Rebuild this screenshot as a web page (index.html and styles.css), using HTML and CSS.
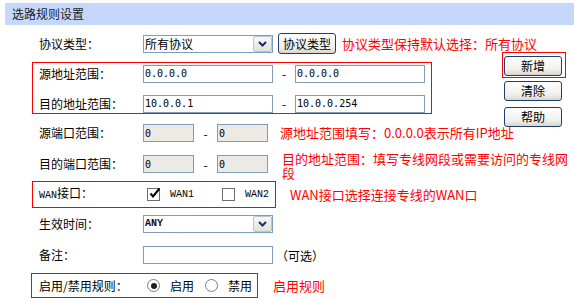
FILE: index.html
```html
<!DOCTYPE html>
<html lang="zh-CN">
<head>
    <meta charset="UTF-8">
    <meta name="viewport" content="width=device-width, initial-scale=1.0">
    <title>选路规则设置</title>
    <link rel="stylesheet" href="styles.css">
</head>
<body>
    <div class="title">选路规则设置</div>

    <div class="form">
        <div class="row row-proto">
            <span class="label">协议类型：</span>
            <div class="select">
                <span class="select-text">所有协议</span>
                <span class="select-arrow">
                    <svg width="9" height="6" viewBox="0 0 9 6"><path d="M1 1 L4.5 4.5 L8 1" fill="none" stroke="#1f2b5c" stroke-width="2"/></svg>
                </span>
            </div>
            <button class="btn btn-inline">协议类型</button>
            <span class="note">协议类型保持默认选择：所有协议</span>
        </div>

        <div class="mark range-box">
            <div class="range-row">
                <span class="label">源地址范围：</span>
                <input class="field ip" type="text" value="0.0.0.0">
                <span class="dash">-</span>
                <input class="field ip" type="text" value="0.0.0.0">
            </div>
            <div class="range-row">
                <span class="label">目的地址范围：</span>
                <input class="field ip" type="text" value="10.0.0.1">
                <span class="dash">-</span>
                <input class="field ip" type="text" value="10.0.0.254">
            </div>
        </div>

        <div class="side">
            <div class="mark add-box"><button class="btn">新增</button></div>
            <button class="btn btn-clear">清除</button>
            <button class="btn btn-help">帮助</button>
        </div>

        <div class="row port-first">
            <span class="label">源端口范围：</span>
            <input class="field port" type="text" value="0" disabled>
            <span class="dash dash-port">-</span>
            <input class="field port" type="text" value="0" disabled>
            <span class="note note-src">源地址范围填写：0.0.0.0表示所有IP地址</span>
        </div>

        <div class="row port-second">
            <span class="label">目的端口范围：</span>
            <input class="field port" type="text" value="0" disabled>
            <span class="dash dash-port">-</span>
            <input class="field port" type="text" value="0" disabled>
            <span class="note note-dst">目的地址范围：填写专线网段或需要访问的专线网段</span>
        </div>

        <div class="row row-wan">
            <div class="mark wan-box">
                <span class="label"><span class="mono">WAN</span>接口：</span>
                <span class="check checked">
                    <svg width="13" height="13" viewBox="0 0 13 13"><path d="M2.5 6.5 L5 9.5 L11.5 1.5" fill="none" stroke="#000" stroke-width="2"/></svg>
                </span>
                <span class="opt mono">WAN1</span>
                <span class="check check-second"></span>
                <span class="opt mono">WAN2</span>
            </div>
            <span class="note note-wan">WAN接口选择连接专线的WAN口</span>
        </div>

        <div class="row row-time">
            <span class="label">生效时间：</span>
            <div class="select">
                <span class="select-text mono any">ANY</span>
                <span class="select-arrow">
                    <svg width="9" height="6" viewBox="0 0 9 6"><path d="M1 1 L4.5 4.5 L8 1" fill="none" stroke="#1f2b5c" stroke-width="2"/></svg>
                </span>
            </div>
        </div>

        <div class="row row-memo">
            <span class="label">备注：</span>
            <input class="field" type="text" value="">
            <span class="optional">（可选）</span>
        </div>

        <div class="row row-enable">
            <div class="mark enable-box">
                <span class="label">启用/禁用规则：</span>
                <span class="radio checked"></span>
                <span class="opt">启用</span>
                <span class="radio radio-second"></span>
                <span class="opt">禁用</span>
            </div>
            <span class="note note-enable">启用规则</span>
        </div>
    </div>
</body>
</html>
```

FILE: styles.css
```css
body {
    margin: 0;
    padding-top: 3px;
    background: #fff;
    color: #000;
    font-family: "Noto Sans CJK SC", sans-serif;
    font-size: 12px;
}

.title {
    margin-left: 5px;
    height: 22px;
    line-height: 22px;
    padding-left: 7px;
    background: #c5d8fb;
    color: #1c1c1c;
    font-size: 12px;
}

.form {
    display: grid;
    grid-template-columns: minmax(0, 1fr) 72px;
}

.row {
    grid-column: 1 / -1;
    display: flex;
    align-items: center;
    height: 30px;
    padding-left: 39px;
    min-width: 0;
}

.label {
    width: 104px;
    flex-shrink: 0;
    line-height: 14px;
    white-space: nowrap;
}

.mono {
    font-family: "Liberation Mono", monospace;
    font-size: 10px;
}

.note {
    color: #ff0000;
    font-size: 13px;
    line-height: 14px;
    white-space: nowrap;
}

/* red marks around groups */
.mark {
    border: 1px solid #ff0000;
    box-sizing: border-box;
}

.row-proto {
    height: 37px;
}

.row-proto .note {
    margin-left: 6px;
}

/* select look-alike */
.select {
    display: flex;
    align-items: center;
    width: 130px;
    height: 18px;
    flex-shrink: 0;
    box-sizing: border-box;
    border: 1px solid #7f9db9;
    background: #fff;
}

.select-text {
    flex: 1;
    padding-left: 1px;
    line-height: 14px;
}

.select-text.any {
    font-weight: bold;
    color: #0a0a30;
}

.select-arrow {
    width: 19px;
    height: 16px;
    box-sizing: border-box;
    display: flex;
    align-items: center;
    justify-content: center;
    border: 1px solid #b9c3d3;
    border-radius: 2px;
    background: linear-gradient(#f8f8f6, #e2e2dc);
}

.btn {
    width: 58px;
    height: 20px;
    flex-shrink: 0;
    padding: 0;
    border: 1px solid #1c3f6e;
    border-radius: 3px;
    background: linear-gradient(#ffffff, #f0f0ec 70%, #d9d5cc);
    font-family: "Noto Sans CJK SC", sans-serif;
    font-size: 12px;
    line-height: 16px;
    color: #000;
}

.btn-inline {
    height: 21px;
    margin-left: 5px;
}

.field {
    width: 130px;
    height: 18px;
    flex-shrink: 0;
    box-sizing: border-box;
    margin: 0;
    padding: 0 1px;
    border: 1px solid #7f9db9;
    background: #fff;
    font-family: "DejaVu Sans Mono", monospace;
    font-size: 10px;
    color: #000;
    outline: none;
}

.field.port {
    width: 51px;
    background: #ebeae4;
}

.field:disabled {
    color: #000;
    -webkit-text-fill-color: #000;
}

.dash {
    width: 22px;
    text-align: center;
    flex-shrink: 0;
}

.dash-port {
    width: 23px;
}

/* source / destination address box */
.range-box {
    grid-column: 1;
    margin-left: 32px;
    width: 400px;
    height: 52px;
    padding: 1px 0 0 6px;
}

.range-row {
    display: flex;
    align-items: center;
    height: 19px;
}

.range-row + .range-row {
    margin-top: 11px;
}

/* right hand buttons */
.side {
    grid-column: 2;
    grid-row: 2 / span 2;
    margin-top: -10px;
    align-self: start;
    display: flex;
    flex-direction: column;
    align-items: flex-start;
}

.add-box {
    padding: 3px 3px 1px 1px;
}

.btn-clear {
    margin: 3px 0 0 2px;
}

.btn-help {
    margin: 6px 0 0 2px;
}

.port-first {
    grid-column: 1;
    margin-top: 4px;
}

.port-second {
    margin-top: 1px;
}

.note-src {
    margin-left: 12px;
}

.note-dst {
    flex: 1;
    min-width: 0;
    margin-left: 14px;
    margin-top: 4px;
    white-space: normal;
}

/* WAN row */
.row-wan {
    height: 27px;
    margin-top: 2px;
    padding-left: 32px;
}

.wan-box {
    display: flex;
    align-items: center;
    width: 244px;
    height: 27px;
    padding-left: 6px;
}

.check {
    width: 13px;
    height: 13px;
    box-sizing: border-box;
    flex-shrink: 0;
    margin-left: 4px;
    border: 1px solid #6e6e6e;
    background: #fff;
    position: relative;
}

.check svg {
    position: absolute;
    left: 0;
    top: -2px;
}

.check-second {
    margin-left: 28px;
}

.opt {
    margin-left: 10px;
    line-height: 14px;
}

.note-wan {
    margin-left: 14px;
}

.row-time {
    margin-top: 1px;
}

.row-memo {
    margin-top: 1px;
}

.optional {
    margin-left: 3px;
}

/* enable row */
.row-enable {
    height: 25px;
    margin-top: 3px;
    padding-left: 31px;
}

.enable-box {
    display: flex;
    align-items: center;
    width: 227px;
    height: 25px;
    padding-left: 7px;
}

.radio {
    width: 13px;
    height: 13px;
    box-sizing: border-box;
    flex-shrink: 0;
    margin-left: 4px;
    border: 1px solid #7c7c7c;
    border-radius: 50%;
    background: #fff;
    display: flex;
    align-items: center;
    justify-content: center;
}

.radio.checked::after {
    content: "";
    width: 6px;
    height: 6px;
    border-radius: 50%;
    background: #1e1e1e;
}

.radio-second {
    margin-left: 11px;
}

.note-enable {
    margin-left: 15px;
}
```
